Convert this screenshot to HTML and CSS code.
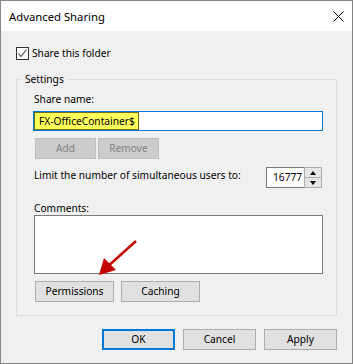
FILE: index.html
```html
<!DOCTYPE html>
<html lang="en">
<head>
  <meta charset="UTF-8">
  <title>Advanced Sharing</title>
  <link rel="stylesheet" href="styles.css">
</head>
<body>

<div class="window">
  <div class="titlebar">
    <span class="title">Advanced Sharing</span>
    <svg class="close" width="11" height="11" viewBox="0 0 11 11">
      <path d="M0.5 0.5L10.5 10.5M10.5 0.5L0.5 10.5" stroke="#000" stroke-width="1"/>
    </svg>
  </div>

  <div class="content">
    <label class="check-row">
      <span class="checkbox">
        <svg width="11" height="11" viewBox="0 0 11 11">
          <path d="M1.5 5.5L4 8.5L9.5 1.5" fill="none" stroke="#444" stroke-width="1.1"/>
        </svg>
      </span>
      Share this folder
    </label>

    <fieldset class="group">
      <legend>Settings</legend>
      <div class="group-body">
        <div class="label">Share name:</div>
        <div class="textbox"><span class="hl">FX-OfficeContainer$</span></div>

        <div class="btn-row small">
          <button disabled>Add</button>
          <button disabled>Remove</button>
        </div>

        <div class="limit-row">
          <span class="label">Limit the number of simultaneous users to:</span>
          <div class="spin">
            <div class="spin-input">16777</div>
            <div class="spin-btns">
              <span class="spin-up"></span>
              <span class="spin-down"></span>
            </div>
          </div>
        </div>

        <div class="label comments-label">Comments:</div>
        <div class="textarea"></div>

        <div class="btn-row wide">
          <button>Permissions</button>
          <button>Caching</button>
        </div>
      </div>
    </fieldset>

    <div class="dialog-buttons">
      <button class="primary">OK</button>
      <button>Cancel</button>
      <button>Apply</button>
    </div>
  </div>

  <!-- annotation arrow drawn over the dialog -->
  <svg class="arrow" width="353" height="364" viewBox="0 0 353 364">
    <line x1="136" y1="241" x2="106" y2="268" stroke="#c40000" stroke-width="2.4"/>
    <polygon points="99,275 104,258 116,270" fill="#c40000"/>
  </svg>
</div>

</body>
</html>
```

FILE: styles.css
```css
body {
  margin: 0;
  padding: 0;
  background-color: #fff;
}
.window {
  position: relative;
  width: 353px;
  height: 364px;
  box-sizing: border-box;
  border: 1px solid #858585;
  background-color: #f0f0f0;
  font-family: "Noto Sans", sans-serif;
  font-size: 10.2px;
  line-height: 13px;
  color: #000;
}
.titlebar {
  height: 30px;
  background-color: #fff;
  display: flex;
  align-items: center;
  padding: 0 8px;
}
.title {
  font-size: 11.3px;
  line-height: 15px;
}
.close {
  margin-left: auto;
}
.content {
  padding: 16px 15px 0;
}
.check-row {
  display: flex;
  align-items: center;
  height: 13px;
}
.checkbox {
  width: 13px;
  height: 13px;
  box-sizing: border-box;
  border: 1px solid #333;
  background-color: #fff;
  margin-right: 3px;
  display: flex;
}
.group {
  margin: 13px 0 0;
  padding: 0;
  border: 1px solid #dcdcdc;
  min-width: 0;
}
.group legend {
  margin-left: 5px;
  padding: 0 3px;
}
.group-body {
  padding: 7px 13px 13px 16px;
}
.label {
  margin-left: 1px;
  white-space: nowrap;
}
.textbox {
  margin-top: 5px;
  height: 20px;
  box-sizing: border-box;
  border: 1px solid #0078d7;
  background-color: #fff;
  display: flex;
}
.hl {
  background-color: #ffff5a;
  border: 1px solid #6e6e22;
  padding: 0 3px 0 4px;
  line-height: 16px;
}
button {
  font: inherit;
  height: 21px;
  padding: 0;
  border: 1px solid #adadad;
  background-color: #e1e1e1;
  color: #000;
}
button:disabled {
  background-color: #cccccc;
  border-color: #bfbfbf;
  color: #838383;
}
.btn-row {
  display: flex;
  margin-left: 2px;
}
.btn-row.small {
  margin-top: 7px;
  gap: 2px;
}
.btn-row.small button {
  width: 61px;
}
.limit-row {
  display: flex;
  justify-content: space-between;
  align-items: flex-start;
  margin-top: 8px;
}
.limit-row .label {
  margin-top: 2px;
}
.spin {
  margin-right: 1px;
  width: 56px;
  height: 21px;
  display: flex;
}
.spin-input {
  flex: 1;
  min-width: 0;
  box-sizing: border-box;
  border: 1px solid #7a7a7a;
  border-right: none;
  background-color: #fff;
  white-space: nowrap;
  padding-left: 6px;
  line-height: 19px;
}
.spin-btns {
  width: 18px;
  box-sizing: border-box;
  border: 1px solid #adadad;
  display: flex;
  flex-direction: column;
}
.spin-up,
.spin-down {
  flex: 1;
  background-color: #e5e5e5;
  display: flex;
  align-items: center;
  justify-content: center;
}
.spin-up {
  border-bottom: 1px solid #adadad;
}
.spin-up::after {
  content: "";
  border-left: 3px solid transparent;
  border-right: 3px solid transparent;
  border-bottom: 4px solid #000;
}
.spin-down::after {
  content: "";
  border-left: 3px solid transparent;
  border-right: 3px solid transparent;
  border-top: 4px solid #000;
}
.comments-label {
  margin-top: 14px;
}
.textarea {
  margin-left: 1px;
  height: 59px;
  box-sizing: border-box;
  border: 1px solid #7a7a7a;
  background-color: #fff;
}
.btn-row.wide {
  margin-top: 7px;
  gap: 7px;
}
.btn-row.wide button {
  width: 79px;
}
.dialog-buttons {
  display: flex;
  justify-content: flex-end;
  gap: 8px;
  margin-top: 13px;
}
.dialog-buttons button {
  width: 73px;
}
.dialog-buttons .primary {
  border: 2px solid #0078d7;
}
.arrow {
  position: absolute;
  left: -1px;
  top: -1px;
  pointer-events: none;
}
```
